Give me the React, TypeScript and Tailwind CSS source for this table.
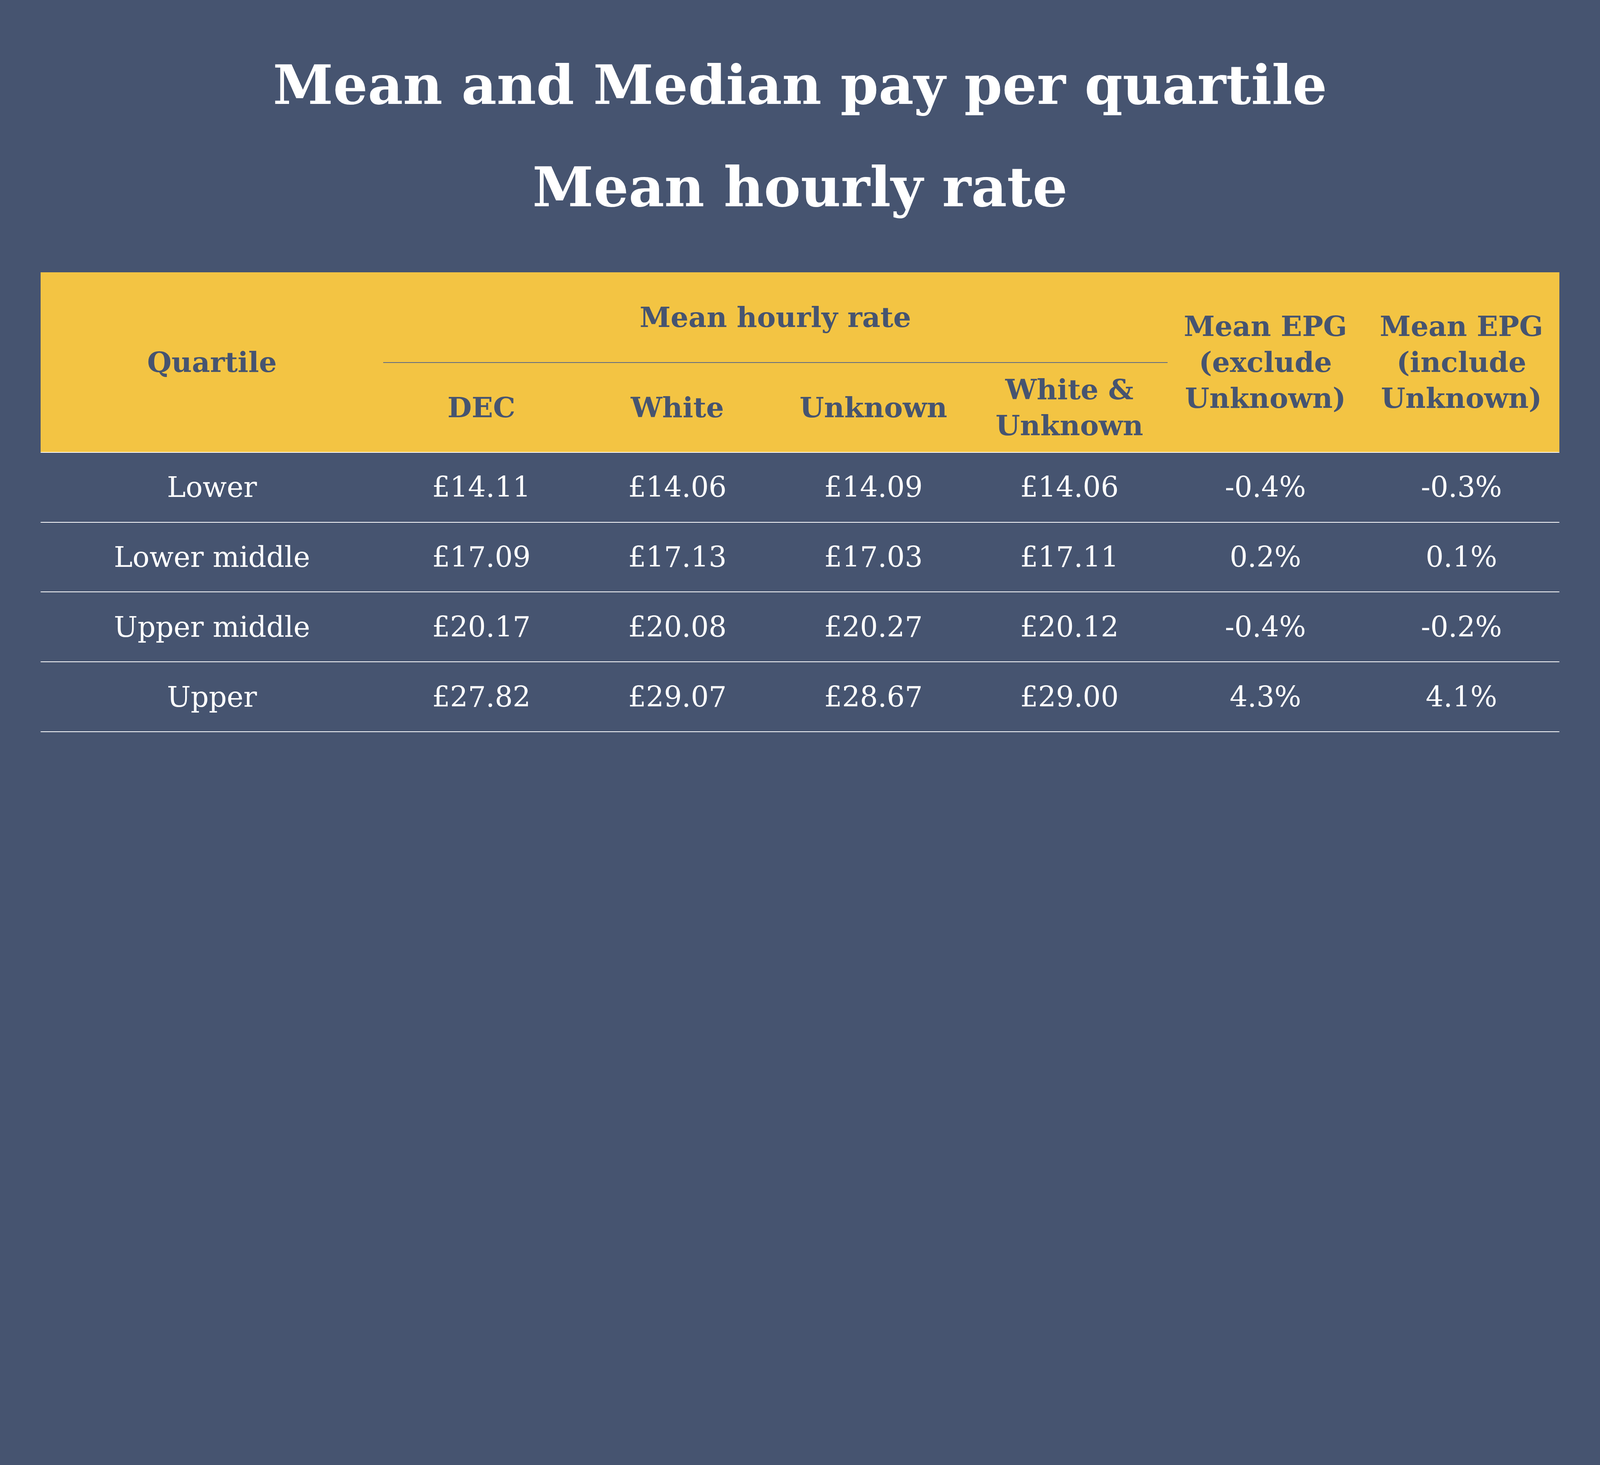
const ROWS = [
  { q: 'Lower', v: ['£14.11', '£14.06', '£14.09', '£14.06', '-0.4%', '-0.3%'] },
  { q: 'Lower middle', v: ['£17.09', '£17.13', '£17.03', '£17.11', '0.2%', '0.1%'] },
  { q: 'Upper middle', v: ['£20.17', '£20.08', '£20.27', '£20.12', '-0.4%', '-0.2%'] },
  { q: 'Upper', v: ['£27.82', '£29.07', '£28.67', '£29.00', '4.3%', '4.1%'] },
];

const SUB = [['DEC'], ['White'], ['Unknown'], ['White &', 'Unknown']];

export default function App() {
  return (
    <div className="min-h-screen w-full overflow-hidden bg-[#465470] font-['DejaVu_Serif',serif] pt-[3.045vw] px-[2.535vw]">
      <h1 className="text-center whitespace-nowrap text-[3.4vw] leading-[4.5vw] font-bold text-white">Mean and Median pay per quartile</h1>
      <h2 className="mt-[1.875vw] text-center whitespace-nowrap text-[3.45vw] leading-[4.5vw] font-bold text-white">Mean hourly rate</h2>

      <div className="mt-[3.09vw]">
        {/* header */}
        <div className="grid grid-cols-[22.57%_repeat(6,minmax(0,1fr))] grid-rows-[5.625vw_5.61vw] bg-[#F3C443] text-[1.75vw] leading-[2.25vw] font-bold text-[#465470] text-center whitespace-nowrap border-b-2 border-white">
          <div className="row-span-2 flex items-center justify-center">Quartile</div>
          <div className="col-span-4 flex items-center justify-center">Mean hourly rate</div>
          <div className="row-span-2 flex flex-col items-center justify-center">
            <span>Mean EPG</span><span>(exclude</span><span>Unknown)</span>
          </div>
          <div className="row-span-2 flex flex-col items-center justify-center">
            <span>Mean EPG</span><span>(include</span><span>Unknown)</span>
          </div>
          {SUB.map((lines, i) => (
            <div key={i} className="flex flex-col items-center justify-center border-t-2 border-[#5b6886]">
              {lines.map(l => <span key={l}>{l}</span>)}
            </div>
          ))}
        </div>

        {/* body */}
        {ROWS.map(r => (
          <div key={r.q} className="grid grid-cols-[22.57%_repeat(6,minmax(0,1fr))] h-[4.365vw] border-b-2 border-white text-[1.76vw] text-white text-center whitespace-nowrap">
            <div className="flex items-center justify-center">{r.q}</div>
            {r.v.map((v, i) => (
              <div key={i} className="flex items-center justify-center">{v}</div>
            ))}
          </div>
        ))}
      </div>
    </div>
  );
}
